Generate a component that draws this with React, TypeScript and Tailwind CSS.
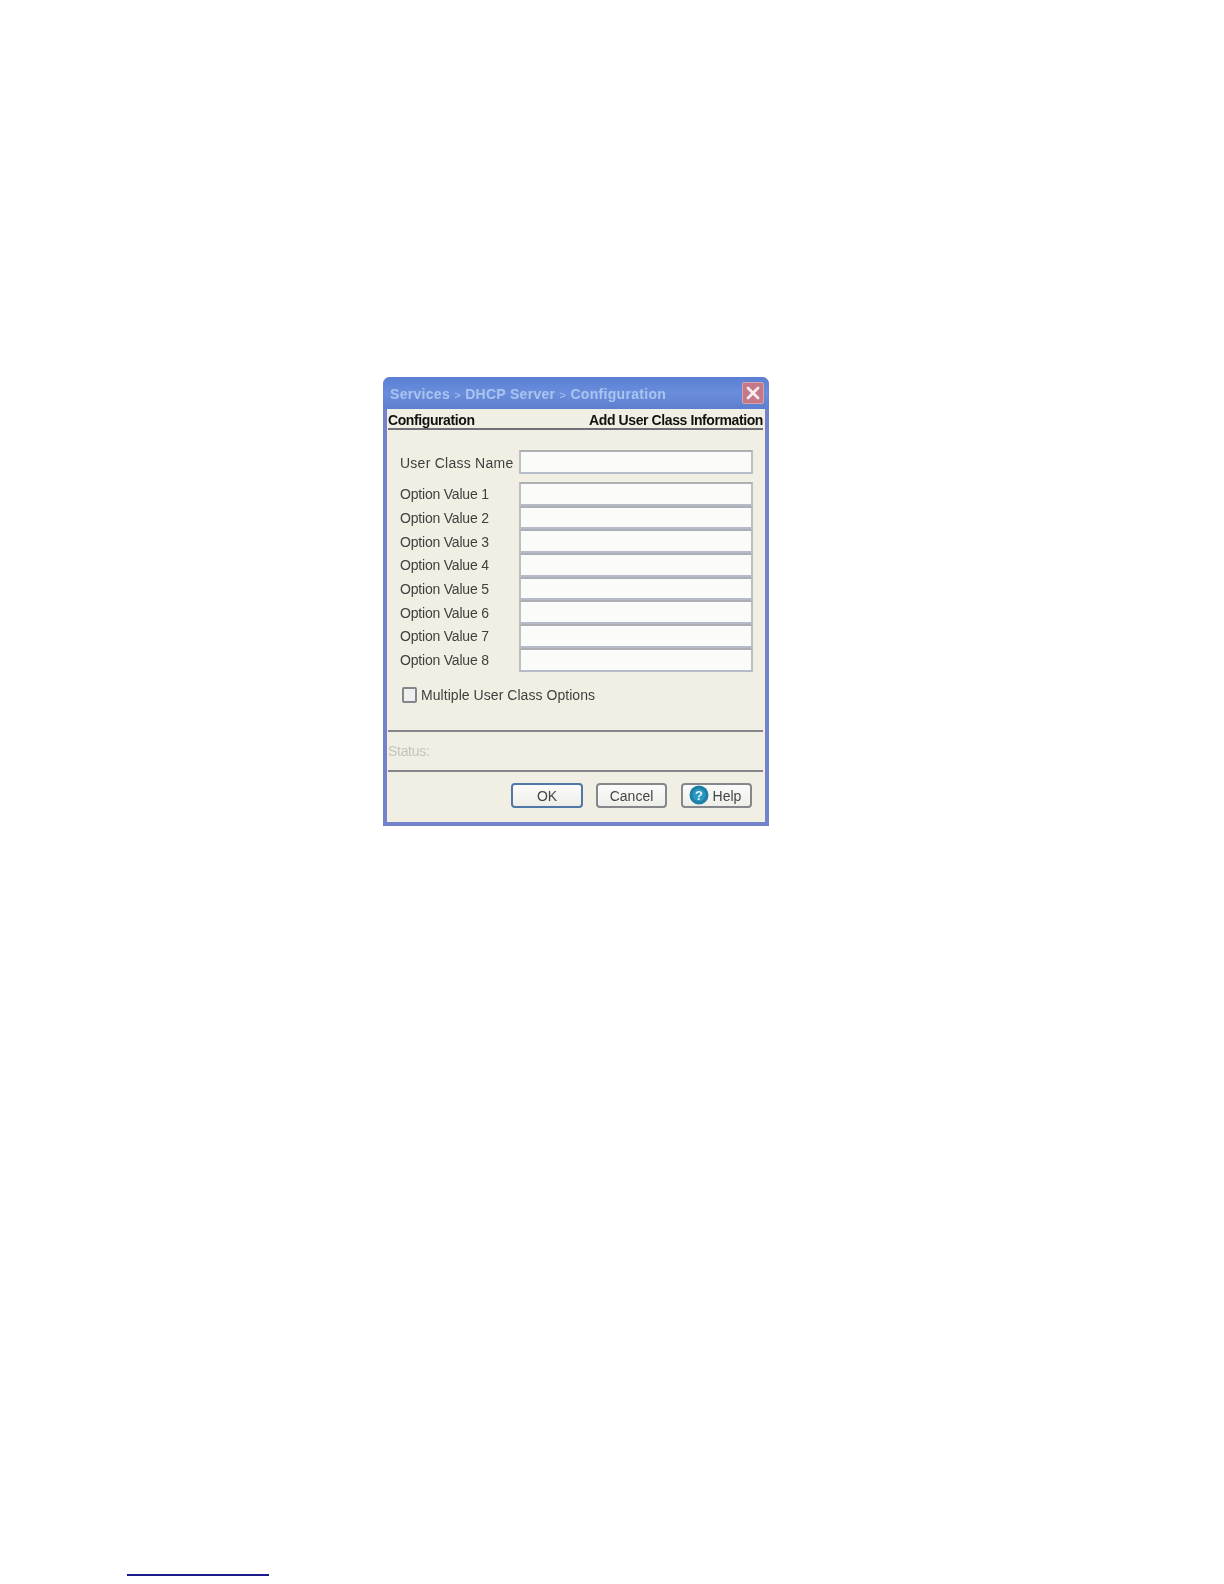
const options = [1, 2, 3, 4, 5, 6, 7, 8];

function Field({ h }: { h: string }) {
  return (
    <div className={"w-[234px] shrink-0 bg-[#fbfbf9] border-2 border-t-[#acafb3] border-l-[#bcbfc1] border-r-[#bcbfc1] border-b-[#b6bbc8] " + h} />
  );
}

function Btn({ children, primary, wide }: { children: React.ReactNode; primary?: boolean; wide?: boolean }) {
  return (
    <div
      className={
        "h-[25px] pt-[2px] flex items-center justify-center gap-[4px] rounded-[4px] bg-gradient-to-b from-[#fbfbfa] to-[#eeeee9] text-[14px] text-[#454543] border-2 " +
        (wide ? "w-[72px] " : "w-[71px] ") +
        (primary ? "border-[#4f77a8]" : "border-[#84888d]")
      }
    >
      {children}
    </div>
  );
}

export default function App() {
  return (
    <div className="w-[1224px] h-[1584px] bg-white pt-[377px] font-['Liberation_Sans',Arial,sans-serif]">
      <div className="ml-[383px] w-[386px] h-[449px] flex flex-col rounded-t-[7px] overflow-hidden bg-[#7382cb] px-[4px] pb-[4px] blur-[0.5px]">
        <div className="h-[32px] -mx-[4px] pl-[7px] pr-[5px] shrink-0 flex items-center justify-between bg-gradient-to-b from-[#5a7fd4] via-[#6a8edb] to-[#5c7ed0]">
          <span className="pt-[2px] text-[14px] font-bold tracking-[0.3px] text-[#a9c4f0] whitespace-pre">
            Services <span className="text-[11px] font-normal">&gt;</span> DHCP Server <span className="text-[11px] font-normal">&gt;</span> Configuration
          </span>
          <div className="w-[22px] h-[22px] mt-[-1px] rounded-[2px] bg-[#c57888] border border-[#d8a2ad] flex items-center justify-center">
            <svg width="14" height="14" viewBox="0 0 14 14">
              <path d="M2 2 L12 12 M12 2 L2 12" stroke="#fbeef0" strokeWidth="2.8" strokeLinecap="round" />
            </svg>
          </div>
        </div>

        <div className="flex-1 flex flex-col bg-[#f1efe4] pl-[1px]">
          <div className="h-[21px] pt-[4px] mr-[2px] flex items-center justify-between border-b-2 border-[#6f7178] text-[14px] font-bold tracking-[-0.4px] text-[#111110]">
            <span>Configuration</span>
            <span>Add User Class Information</span>
          </div>

          <div className="pl-[12px] pt-[20px]">
            <div className="flex items-center h-[24px]">
              <span className="w-[119px] pt-[2px] text-[14px] tracking-[0.25px] text-[#3f3f3d] whitespace-nowrap">User Class Name</span>
              <Field h="h-[24px]" />
            </div>
            <div className="mt-[8px] flex flex-col">
              {options.map((n) => (
                <div key={n} className="flex items-center h-[23.7px]">
                  <span className="w-[119px] pt-[2px] text-[14px] tracking-[-0.2px] text-[#3f3f3d] whitespace-nowrap">Option Value {n}</span>
                  <Field h="h-[23.7px]" />
                </div>
              ))}
            </div>
            <div className="mt-[15.4px] ml-[2px] flex items-center gap-[4px] h-[16px]">
              <div className="w-[15px] h-[16px] rounded-[2px] border-2 border-[#83878d] bg-[#eef0ef]" />
              <span className="pt-[1px] text-[14px] tracking-[0.05px] text-[#3f3f3d] whitespace-nowrap">Multiple User Class Options</span>
            </div>
          </div>

          <div className="mt-[27px] mr-[2px] h-[42px] pt-[2px] flex items-center border-y-2 border-[#85868c] text-[14px] tracking-[-0.3px] text-[#c4c4ba]">
            Status:
          </div>

          <div className="mt-[11px] pr-[13px] flex justify-end">
            <Btn primary wide>OK</Btn>
            <div className="ml-[13px] mr-[14px]">
              <Btn>Cancel</Btn>
            </div>
            <Btn>
              <svg width="20" height="20" viewBox="0 0 20 20" className="-mt-[2px]">
                <circle cx="10" cy="10" r="9.5" fill="#1f7fa6" />
                <circle cx="10" cy="10" r="6.5" fill="#2a98c0" />
                <text x="10" y="14.5" textAnchor="middle" fontSize="13" fontWeight="700" fill="#e8f6fb" fontFamily="Liberation Sans">?</text>
              </svg>
              <span className="mr-[3px]">Help</span>
            </Btn>
          </div>
        </div>
      </div>

      <div className="ml-[127px] mt-[748px] w-[142px] h-[2px] bg-[#1a1a8c]" />
    </div>
  );
}
